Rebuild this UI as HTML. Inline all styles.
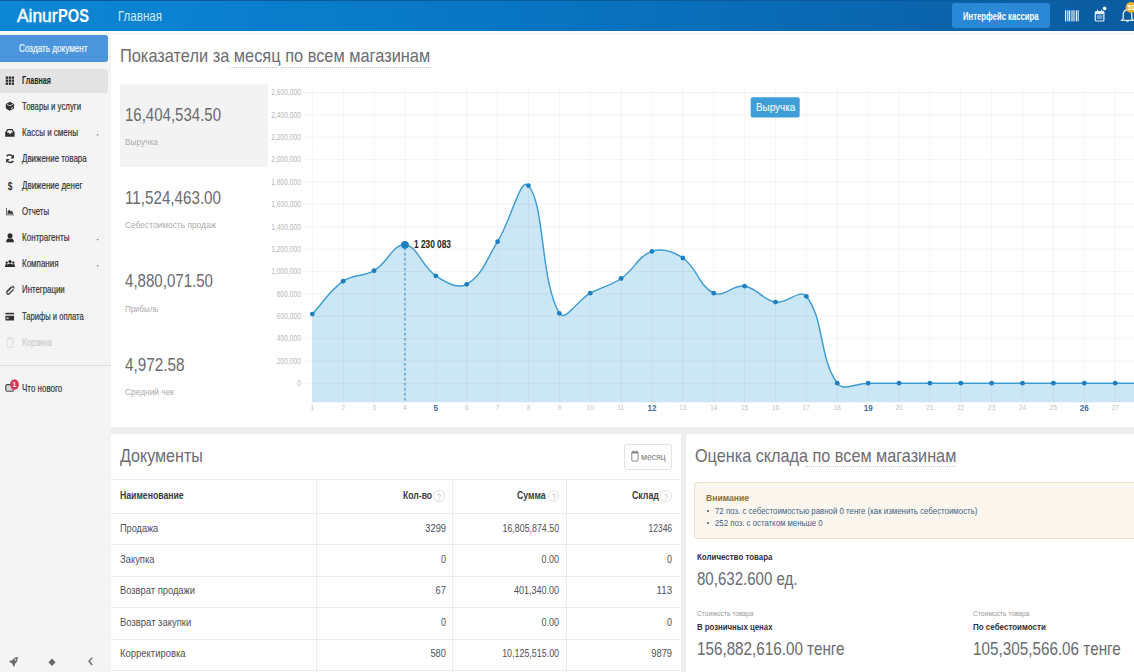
<!DOCTYPE html>
<html><head><meta charset="utf-8"><style>
html,body{margin:0;padding:0;width:1134px;height:672px;overflow:hidden;background:#eee}
body{position:relative;font-family:"Liberation Sans",sans-serif}
.b{position:absolute}
.t{position:absolute;white-space:nowrap;line-height:1}
svg text{font-family:"Liberation Sans",sans-serif}
</style></head><body>
<div class="b" style="left:0px;top:0px;width:1134px;height:672px;background:#eeeeee"></div>
<div class="b" style="left:0px;top:0px;width:1134px;height:31px;background:linear-gradient(90deg,#0d87d5 0%,#0878c6 40%,#0a65ae 80%,#0b5b9f 100%)"></div>
<div class="b" style="left:0px;top:0px;width:1134px;height:1px;background:#0b5a9c"></div>
<div class="t" style="left:17.1px;top:7px;font-size:18.6px;font-weight:400;color:#fff;-webkit-text-stroke:0.5px #fff;transform:scaleX(0.9327);transform-origin:0 0">Ainur</div>
<div class="t" style="left:58.3px;top:7px;font-size:18.6px;font-weight:700;color:#fff;;transform:scaleX(0.7892);transform-origin:0 0">POS</div>
<div class="t" style="left:118.0px;top:9px;font-size:14.4px;font-weight:400;color:#cfeafc;;transform:scaleX(0.8032);transform-origin:0 0">Главная</div>
<div class="b" style="left:951.5px;top:3px;width:98.0px;height:25px;background:#2a88d6;border-radius:3px"></div>
<div class="t" style="left:962.8px;top:12px;font-size:10px;font-weight:700;color:#fff;;transform:scaleX(0.7717);transform-origin:0 0">Интерфейс кассира</div>
<div class="b" style="left:0px;top:31px;width:111px;height:641px;background:#f4f4f4"></div>
<div class="b" style="left:0px;top:31px;width:1134px;height:3px;background:#f0f0f0"></div>
<div class="b" style="left:0px;top:31px;width:1134px;height:1.6000000000000014px;background:#fcfcfc"></div>
<div class="b" style="left:0px;top:35px;width:107.5px;height:26.5px;background:#4b95dc;border-radius:0 3px 3px 0"></div>
<div class="t" style="left:18.6px;top:43px;font-size:10.6px;font-weight:400;color:#f2f8fd;-webkit-text-stroke:0.2px currentColor;transform:scaleX(0.7700);transform-origin:0 0">Создать документ</div>
<div class="b" style="left:0px;top:68.5px;width:107.5px;height:24.5px;background:#e3e3e3;border-radius:0 3px 3px 0"></div>
<div class="t" style="left:22.0px;top:76px;font-size:10px;font-weight:700;color:#222;;transform:scaleX(0.7130);transform-origin:0 0">Главная</div>
<div class="t" style="left:22.0px;top:102px;font-size:10px;font-weight:400;color:#333;-webkit-text-stroke:0.18px currentColor;transform:scaleX(0.7815);transform-origin:0 0">Товары и услуги</div>
<div class="t" style="left:22.0px;top:128px;font-size:10px;font-weight:400;color:#333;-webkit-text-stroke:0.18px currentColor;transform:scaleX(0.8014);transform-origin:0 0">Кассы и смены</div>
<div class="t" style="left:22.0px;top:154px;font-size:10px;font-weight:400;color:#333;-webkit-text-stroke:0.18px currentColor;transform:scaleX(0.7958);transform-origin:0 0">Движение товара</div>
<div class="t" style="left:22.0px;top:181px;font-size:10px;font-weight:400;color:#333;-webkit-text-stroke:0.18px currentColor;transform:scaleX(0.7987);transform-origin:0 0">Движение денег</div>
<div class="t" style="left:22.0px;top:207px;font-size:10px;font-weight:400;color:#333;-webkit-text-stroke:0.18px currentColor;transform:scaleX(0.7808);transform-origin:0 0">Отчеты</div>
<div class="t" style="left:22.0px;top:233px;font-size:10px;font-weight:400;color:#333;-webkit-text-stroke:0.18px currentColor;transform:scaleX(0.8081);transform-origin:0 0">Контрагенты</div>
<div class="t" style="left:22.0px;top:259px;font-size:10px;font-weight:400;color:#333;-webkit-text-stroke:0.18px currentColor;transform:scaleX(0.7975);transform-origin:0 0">Компания</div>
<div class="t" style="left:22.0px;top:285px;font-size:10px;font-weight:400;color:#333;-webkit-text-stroke:0.18px currentColor;transform:scaleX(0.7846);transform-origin:0 0">Интеграции</div>
<div class="t" style="left:22.0px;top:312px;font-size:10px;font-weight:400;color:#333;-webkit-text-stroke:0.18px currentColor;transform:scaleX(0.7607);transform-origin:0 0">Тарифы и оплата</div>
<div class="t" style="left:22.0px;top:338px;font-size:10px;font-weight:400;color:#c4c4c4;;transform:scaleX(0.7875);transform-origin:0 0">Корзина</div>
<div class="t" style="left:22.0px;top:384px;font-size:10px;font-weight:400;color:#333;-webkit-text-stroke:0.18px currentColor;transform:scaleX(0.7990);transform-origin:0 0">Что нового</div>
<div class="b" style="left:0px;top:365px;width:111px;height:1px;background:#dddddd"></div>
<div class="b" style="left:111px;top:34px;width:1023px;height:393px;background:#fff"></div>
<div class="t" style="left:120.2px;top:47px;font-size:18.4px;font-weight:400;color:#6c6c72;;transform:scaleX(0.8900);transform-origin:0 0">Показатели за месяц по всем магазинам</div>
<div class="b" style="left:229.5px;top:67px;width:47px;height:0;border-top:1px dotted #c4c4c4"></div>
<div class="b" style="left:280.5px;top:67px;width:150px;height:0;border-top:1px dotted #c4c4c4"></div>
<div class="b" style="left:120px;top:83.5px;width:148px;height:83.0px;background:#f3f3f3"></div>
<div class="t" style="left:125.3px;top:106px;font-size:18.2px;font-weight:400;color:#6a6a70;;transform:scaleX(0.8254);transform-origin:0 0">16,404,534.50</div>
<div class="t" style="left:125.3px;top:137px;font-size:9.8px;font-weight:400;color:#ababab;;transform:scaleX(0.8437);transform-origin:0 0">Выручка</div>
<div class="t" style="left:125.3px;top:189px;font-size:18.2px;font-weight:400;color:#6a6a70;;transform:scaleX(0.8350);transform-origin:0 0">11,524,463.00</div>
<div class="t" style="left:125.3px;top:220px;font-size:9.8px;font-weight:400;color:#ababab;;transform:scaleX(0.8550);transform-origin:0 0">Себестоимость продаж</div>
<div class="t" style="left:125.3px;top:272px;font-size:18.2px;font-weight:400;color:#6a6a70;;transform:scaleX(0.8286);transform-origin:0 0">4,880,071.50</div>
<div class="t" style="left:125.3px;top:304px;font-size:9.8px;font-weight:400;color:#ababab;;transform:scaleX(0.8084);transform-origin:0 0">Прибыль</div>
<div class="t" style="left:125.3px;top:356px;font-size:18.2px;font-weight:400;color:#6a6a70;;transform:scaleX(0.8404);transform-origin:0 0">4,972.58</div>
<div class="t" style="left:125.3px;top:387px;font-size:9.8px;font-weight:400;color:#ababab;;transform:scaleX(0.8538);transform-origin:0 0">Средний чек</div>
<svg class="chart" width="1134" height="672" viewBox="0 0 1134 672" style="position:absolute;left:0;top:0">
<defs><clipPath id="cp"><rect x="111" y="34" width="1023" height="393"/></clipPath></defs><g clip-path="url(#cp)">
<path d="M312.30,314.10 C324.65,300.94 328.84,291.28 343.18,281.20 C353.54,273.92 363.01,277.21 374.06,270.70 C387.71,262.65 393.10,243.82 404.94,244.80 C417.80,245.86 421.56,266.68 435.82,275.80 C446.26,282.48 457.35,289.46 466.70,284.30 C482.06,275.82 486.44,259.51 497.58,241.70 C511.14,220.03 520.36,176.21 528.46,185.60 C545.07,204.85 540.05,279.69 559.34,313.30 C564.75,322.73 577.41,300.42 590.22,293.20 C602.11,286.50 609.88,286.10 621.10,278.50 C634.58,269.38 638.01,256.04 651.98,251.40 C662.72,247.84 672.91,251.27 682.86,258.00 C697.61,267.99 699.00,286.47 713.74,293.20 C723.71,297.75 732.84,284.50 744.62,286.20 C757.54,288.06 762.53,299.98 775.50,302.10 C787.23,304.02 800.10,288.06 806.38,296.30 C824.81,320.50 818.75,357.16 837.26,383.20 C843.46,391.92 855.79,383.20 868.14,383.20 C880.49,383.20 886.67,383.20 899.02,383.20 C911.37,383.20 917.55,383.20 929.90,383.20 C942.25,383.20 948.43,383.20 960.78,383.20 C973.13,383.20 979.31,383.20 991.66,383.20 C1004.01,383.20 1010.19,383.20 1022.54,383.20 C1034.89,383.20 1041.07,383.20 1053.42,383.20 C1065.77,383.20 1071.95,383.20 1084.30,383.20 C1096.65,383.20 1102.83,383.20 1115.18,383.20 C1127.53,383.20 1133.71,383.20 1146.06,383.20 C1158.41,383.20 1164.59,383.20 1176.94,383.20 C1189.29,383.20 1195.47,383.20 1207.82,383.20 C1220.17,383.20 1226.35,383.20 1238.70,383.20 L1238.70,402.3 L312.30,402.3 Z" fill="#cbe6f5"/>
<line x1="303.5" y1="383.40" x2="1134" y2="383.40" stroke="rgba(0,0,0,0.045)" stroke-width="1"/>
<line x1="303.5" y1="361.02" x2="1134" y2="361.02" stroke="rgba(0,0,0,0.045)" stroke-width="1"/>
<line x1="303.5" y1="338.64" x2="1134" y2="338.64" stroke="rgba(0,0,0,0.045)" stroke-width="1"/>
<line x1="303.5" y1="316.26" x2="1134" y2="316.26" stroke="rgba(0,0,0,0.045)" stroke-width="1"/>
<line x1="303.5" y1="293.88" x2="1134" y2="293.88" stroke="rgba(0,0,0,0.045)" stroke-width="1"/>
<line x1="303.5" y1="271.50" x2="1134" y2="271.50" stroke="rgba(0,0,0,0.045)" stroke-width="1"/>
<line x1="303.5" y1="249.12" x2="1134" y2="249.12" stroke="rgba(0,0,0,0.045)" stroke-width="1"/>
<line x1="303.5" y1="226.74" x2="1134" y2="226.74" stroke="rgba(0,0,0,0.045)" stroke-width="1"/>
<line x1="303.5" y1="204.36" x2="1134" y2="204.36" stroke="rgba(0,0,0,0.045)" stroke-width="1"/>
<line x1="303.5" y1="181.98" x2="1134" y2="181.98" stroke="rgba(0,0,0,0.045)" stroke-width="1"/>
<line x1="303.5" y1="159.60" x2="1134" y2="159.60" stroke="rgba(0,0,0,0.045)" stroke-width="1"/>
<line x1="303.5" y1="137.22" x2="1134" y2="137.22" stroke="rgba(0,0,0,0.045)" stroke-width="1"/>
<line x1="303.5" y1="114.84" x2="1134" y2="114.84" stroke="rgba(0,0,0,0.045)" stroke-width="1"/>
<line x1="303.5" y1="92.46" x2="1134" y2="92.46" stroke="rgba(0,0,0,0.045)" stroke-width="1"/>
<line x1="312.30" y1="86" x2="312.30" y2="402.3" stroke="rgba(0,0,0,0.045)" stroke-width="1"/>
<line x1="343.18" y1="86" x2="343.18" y2="402.3" stroke="rgba(0,0,0,0.045)" stroke-width="1"/>
<line x1="374.06" y1="86" x2="374.06" y2="402.3" stroke="rgba(0,0,0,0.045)" stroke-width="1"/>
<line x1="404.94" y1="86" x2="404.94" y2="402.3" stroke="rgba(0,0,0,0.045)" stroke-width="1"/>
<line x1="435.82" y1="86" x2="435.82" y2="402.3" stroke="rgba(0,0,0,0.045)" stroke-width="1"/>
<line x1="466.70" y1="86" x2="466.70" y2="402.3" stroke="rgba(0,0,0,0.045)" stroke-width="1"/>
<line x1="497.58" y1="86" x2="497.58" y2="402.3" stroke="rgba(0,0,0,0.045)" stroke-width="1"/>
<line x1="528.46" y1="86" x2="528.46" y2="402.3" stroke="rgba(0,0,0,0.045)" stroke-width="1"/>
<line x1="559.34" y1="86" x2="559.34" y2="402.3" stroke="rgba(0,0,0,0.045)" stroke-width="1"/>
<line x1="590.22" y1="86" x2="590.22" y2="402.3" stroke="rgba(0,0,0,0.045)" stroke-width="1"/>
<line x1="621.10" y1="86" x2="621.10" y2="402.3" stroke="rgba(0,0,0,0.045)" stroke-width="1"/>
<line x1="651.98" y1="86" x2="651.98" y2="402.3" stroke="rgba(0,0,0,0.045)" stroke-width="1"/>
<line x1="682.86" y1="86" x2="682.86" y2="402.3" stroke="rgba(0,0,0,0.045)" stroke-width="1"/>
<line x1="713.74" y1="86" x2="713.74" y2="402.3" stroke="rgba(0,0,0,0.045)" stroke-width="1"/>
<line x1="744.62" y1="86" x2="744.62" y2="402.3" stroke="rgba(0,0,0,0.045)" stroke-width="1"/>
<line x1="775.50" y1="86" x2="775.50" y2="402.3" stroke="rgba(0,0,0,0.045)" stroke-width="1"/>
<line x1="806.38" y1="86" x2="806.38" y2="402.3" stroke="rgba(0,0,0,0.045)" stroke-width="1"/>
<line x1="837.26" y1="86" x2="837.26" y2="402.3" stroke="rgba(0,0,0,0.045)" stroke-width="1"/>
<line x1="868.14" y1="86" x2="868.14" y2="402.3" stroke="rgba(0,0,0,0.045)" stroke-width="1"/>
<line x1="899.02" y1="86" x2="899.02" y2="402.3" stroke="rgba(0,0,0,0.045)" stroke-width="1"/>
<line x1="929.90" y1="86" x2="929.90" y2="402.3" stroke="rgba(0,0,0,0.045)" stroke-width="1"/>
<line x1="960.78" y1="86" x2="960.78" y2="402.3" stroke="rgba(0,0,0,0.045)" stroke-width="1"/>
<line x1="991.66" y1="86" x2="991.66" y2="402.3" stroke="rgba(0,0,0,0.045)" stroke-width="1"/>
<line x1="1022.54" y1="86" x2="1022.54" y2="402.3" stroke="rgba(0,0,0,0.045)" stroke-width="1"/>
<line x1="1053.42" y1="86" x2="1053.42" y2="402.3" stroke="rgba(0,0,0,0.045)" stroke-width="1"/>
<line x1="1084.30" y1="86" x2="1084.30" y2="402.3" stroke="rgba(0,0,0,0.045)" stroke-width="1"/>
<line x1="1115.18" y1="86" x2="1115.18" y2="402.3" stroke="rgba(0,0,0,0.045)" stroke-width="1"/>
<line x1="1146.06" y1="86" x2="1146.06" y2="402.3" stroke="rgba(0,0,0,0.045)" stroke-width="1"/>
<line x1="1176.94" y1="86" x2="1176.94" y2="402.3" stroke="rgba(0,0,0,0.045)" stroke-width="1"/>
<line x1="1207.82" y1="86" x2="1207.82" y2="402.3" stroke="rgba(0,0,0,0.045)" stroke-width="1"/>
<line x1="1238.70" y1="86" x2="1238.70" y2="402.3" stroke="rgba(0,0,0,0.045)" stroke-width="1"/>
<path d="M312.30,314.10 C324.65,300.94 328.84,291.28 343.18,281.20 C353.54,273.92 363.01,277.21 374.06,270.70 C387.71,262.65 393.10,243.82 404.94,244.80 C417.80,245.86 421.56,266.68 435.82,275.80 C446.26,282.48 457.35,289.46 466.70,284.30 C482.06,275.82 486.44,259.51 497.58,241.70 C511.14,220.03 520.36,176.21 528.46,185.60 C545.07,204.85 540.05,279.69 559.34,313.30 C564.75,322.73 577.41,300.42 590.22,293.20 C602.11,286.50 609.88,286.10 621.10,278.50 C634.58,269.38 638.01,256.04 651.98,251.40 C662.72,247.84 672.91,251.27 682.86,258.00 C697.61,267.99 699.00,286.47 713.74,293.20 C723.71,297.75 732.84,284.50 744.62,286.20 C757.54,288.06 762.53,299.98 775.50,302.10 C787.23,304.02 800.10,288.06 806.38,296.30 C824.81,320.50 818.75,357.16 837.26,383.20 C843.46,391.92 855.79,383.20 868.14,383.20 C880.49,383.20 886.67,383.20 899.02,383.20 C911.37,383.20 917.55,383.20 929.90,383.20 C942.25,383.20 948.43,383.20 960.78,383.20 C973.13,383.20 979.31,383.20 991.66,383.20 C1004.01,383.20 1010.19,383.20 1022.54,383.20 C1034.89,383.20 1041.07,383.20 1053.42,383.20 C1065.77,383.20 1071.95,383.20 1084.30,383.20 C1096.65,383.20 1102.83,383.20 1115.18,383.20 C1127.53,383.20 1133.71,383.20 1146.06,383.20 C1158.41,383.20 1164.59,383.20 1176.94,383.20 C1189.29,383.20 1195.47,383.20 1207.82,383.20 C1220.17,383.20 1226.35,383.20 1238.70,383.20" fill="none" stroke="#3c9cd2" stroke-width="1.45"/>
<line x1="404.94" y1="248" x2="404.94" y2="402" stroke="#2a86c6" stroke-width="1" stroke-dasharray="2.5,2.5"/>
<circle cx="312.30" cy="314.10" r="2.4" fill="#1c7fc0"/>
<circle cx="343.18" cy="281.20" r="2.4" fill="#1c7fc0"/>
<circle cx="374.06" cy="270.70" r="2.4" fill="#1c7fc0"/>
<circle cx="404.94" cy="244.80" r="3.9" fill="#1c7fc0"/>
<circle cx="435.82" cy="275.80" r="2.4" fill="#1c7fc0"/>
<circle cx="466.70" cy="284.30" r="2.4" fill="#1c7fc0"/>
<circle cx="497.58" cy="241.70" r="2.4" fill="#1c7fc0"/>
<circle cx="528.46" cy="185.60" r="2.4" fill="#1c7fc0"/>
<circle cx="559.34" cy="313.30" r="2.4" fill="#1c7fc0"/>
<circle cx="590.22" cy="293.20" r="2.4" fill="#1c7fc0"/>
<circle cx="621.10" cy="278.50" r="2.4" fill="#1c7fc0"/>
<circle cx="651.98" cy="251.40" r="2.4" fill="#1c7fc0"/>
<circle cx="682.86" cy="258.00" r="2.4" fill="#1c7fc0"/>
<circle cx="713.74" cy="293.20" r="2.4" fill="#1c7fc0"/>
<circle cx="744.62" cy="286.20" r="2.4" fill="#1c7fc0"/>
<circle cx="775.50" cy="302.10" r="2.4" fill="#1c7fc0"/>
<circle cx="806.38" cy="296.30" r="2.4" fill="#1c7fc0"/>
<circle cx="837.26" cy="383.20" r="2.4" fill="#1c7fc0"/>
<circle cx="868.14" cy="383.20" r="2.4" fill="#1c7fc0"/>
<circle cx="899.02" cy="383.20" r="2.4" fill="#1c7fc0"/>
<circle cx="929.90" cy="383.20" r="2.4" fill="#1c7fc0"/>
<circle cx="960.78" cy="383.20" r="2.4" fill="#1c7fc0"/>
<circle cx="991.66" cy="383.20" r="2.4" fill="#1c7fc0"/>
<circle cx="1022.54" cy="383.20" r="2.4" fill="#1c7fc0"/>
<circle cx="1053.42" cy="383.20" r="2.4" fill="#1c7fc0"/>
<circle cx="1084.30" cy="383.20" r="2.4" fill="#1c7fc0"/>
<circle cx="1115.18" cy="383.20" r="2.4" fill="#1c7fc0"/>
<circle cx="1146.06" cy="383.20" r="2.4" fill="#1c7fc0"/>
<circle cx="1176.94" cy="383.20" r="2.4" fill="#1c7fc0"/>
<circle cx="1207.82" cy="383.20" r="2.4" fill="#1c7fc0"/>
<circle cx="1238.70" cy="383.20" r="2.4" fill="#1c7fc0"/>
<text x="301" y="386.20" text-anchor="end" font-size="8.6" fill="#b8b8b8" transform="translate(301,0) scale(0.78,1) translate(-301,0)">0</text>
<text x="301" y="363.82" text-anchor="end" font-size="8.6" fill="#b8b8b8" transform="translate(301,0) scale(0.78,1) translate(-301,0)">200,000</text>
<text x="301" y="341.44" text-anchor="end" font-size="8.6" fill="#b8b8b8" transform="translate(301,0) scale(0.78,1) translate(-301,0)">400,000</text>
<text x="301" y="319.06" text-anchor="end" font-size="8.6" fill="#b8b8b8" transform="translate(301,0) scale(0.78,1) translate(-301,0)">600,000</text>
<text x="301" y="296.68" text-anchor="end" font-size="8.6" fill="#b8b8b8" transform="translate(301,0) scale(0.78,1) translate(-301,0)">800,000</text>
<text x="301" y="274.30" text-anchor="end" font-size="8.6" fill="#b8b8b8" transform="translate(301,0) scale(0.78,1) translate(-301,0)">1,000,000</text>
<text x="301" y="251.92" text-anchor="end" font-size="8.6" fill="#b8b8b8" transform="translate(301,0) scale(0.78,1) translate(-301,0)">1,200,000</text>
<text x="301" y="229.54" text-anchor="end" font-size="8.6" fill="#b8b8b8" transform="translate(301,0) scale(0.78,1) translate(-301,0)">1,400,000</text>
<text x="301" y="207.16" text-anchor="end" font-size="8.6" fill="#b8b8b8" transform="translate(301,0) scale(0.78,1) translate(-301,0)">1,600,000</text>
<text x="301" y="184.78" text-anchor="end" font-size="8.6" fill="#b8b8b8" transform="translate(301,0) scale(0.78,1) translate(-301,0)">1,800,000</text>
<text x="301" y="162.40" text-anchor="end" font-size="8.6" fill="#b8b8b8" transform="translate(301,0) scale(0.78,1) translate(-301,0)">2,000,000</text>
<text x="301" y="140.02" text-anchor="end" font-size="8.6" fill="#b8b8b8" transform="translate(301,0) scale(0.78,1) translate(-301,0)">2,200,000</text>
<text x="301" y="117.64" text-anchor="end" font-size="8.6" fill="#b8b8b8" transform="translate(301,0) scale(0.78,1) translate(-301,0)">2,400,000</text>
<text x="301" y="95.26" text-anchor="end" font-size="8.6" fill="#b8b8b8" transform="translate(301,0) scale(0.78,1) translate(-301,0)">2,600,000</text>
<text x="312.30" y="410.5" text-anchor="middle" font-size="7.5" fill="#c0c0c0" transform="translate(312.30,0) scale(0.85,1) translate(-312.30,0)">1</text>
<text x="343.18" y="410.5" text-anchor="middle" font-size="7.5" fill="#c0c0c0" transform="translate(343.18,0) scale(0.85,1) translate(-343.18,0)">2</text>
<text x="374.06" y="410.5" text-anchor="middle" font-size="7.5" fill="#c0c0c0" transform="translate(374.06,0) scale(0.85,1) translate(-374.06,0)">3</text>
<text x="404.94" y="410.5" text-anchor="middle" font-size="7.5" fill="#c0c0c0" transform="translate(404.94,0) scale(0.85,1) translate(-404.94,0)">4</text>
<text x="435.82" y="411.3" text-anchor="middle" font-size="9.5" font-weight="700" fill="#3d6f9c" transform="translate(435.82,0) scale(0.85,1) translate(-435.82,0)">5</text>
<text x="466.70" y="410.5" text-anchor="middle" font-size="7.5" fill="#c0c0c0" transform="translate(466.70,0) scale(0.85,1) translate(-466.70,0)">6</text>
<text x="497.58" y="410.5" text-anchor="middle" font-size="7.5" fill="#c0c0c0" transform="translate(497.58,0) scale(0.85,1) translate(-497.58,0)">7</text>
<text x="528.46" y="410.5" text-anchor="middle" font-size="7.5" fill="#c0c0c0" transform="translate(528.46,0) scale(0.85,1) translate(-528.46,0)">8</text>
<text x="559.34" y="410.5" text-anchor="middle" font-size="7.5" fill="#c0c0c0" transform="translate(559.34,0) scale(0.85,1) translate(-559.34,0)">9</text>
<text x="590.22" y="410.5" text-anchor="middle" font-size="7.5" fill="#c0c0c0" transform="translate(590.22,0) scale(0.85,1) translate(-590.22,0)">10</text>
<text x="621.10" y="410.5" text-anchor="middle" font-size="7.5" fill="#c0c0c0" transform="translate(621.10,0) scale(0.85,1) translate(-621.10,0)">11</text>
<text x="651.98" y="411.3" text-anchor="middle" font-size="9.5" font-weight="700" fill="#3d6f9c" transform="translate(651.98,0) scale(0.85,1) translate(-651.98,0)">12</text>
<text x="682.86" y="410.5" text-anchor="middle" font-size="7.5" fill="#c0c0c0" transform="translate(682.86,0) scale(0.85,1) translate(-682.86,0)">13</text>
<text x="713.74" y="410.5" text-anchor="middle" font-size="7.5" fill="#c0c0c0" transform="translate(713.74,0) scale(0.85,1) translate(-713.74,0)">14</text>
<text x="744.62" y="410.5" text-anchor="middle" font-size="7.5" fill="#c0c0c0" transform="translate(744.62,0) scale(0.85,1) translate(-744.62,0)">15</text>
<text x="775.50" y="410.5" text-anchor="middle" font-size="7.5" fill="#c0c0c0" transform="translate(775.50,0) scale(0.85,1) translate(-775.50,0)">16</text>
<text x="806.38" y="410.5" text-anchor="middle" font-size="7.5" fill="#c0c0c0" transform="translate(806.38,0) scale(0.85,1) translate(-806.38,0)">17</text>
<text x="837.26" y="410.5" text-anchor="middle" font-size="7.5" fill="#c0c0c0" transform="translate(837.26,0) scale(0.85,1) translate(-837.26,0)">18</text>
<text x="868.14" y="411.3" text-anchor="middle" font-size="9.5" font-weight="700" fill="#3d6f9c" transform="translate(868.14,0) scale(0.85,1) translate(-868.14,0)">19</text>
<text x="899.02" y="410.5" text-anchor="middle" font-size="7.5" fill="#c0c0c0" transform="translate(899.02,0) scale(0.85,1) translate(-899.02,0)">20</text>
<text x="929.90" y="410.5" text-anchor="middle" font-size="7.5" fill="#c0c0c0" transform="translate(929.90,0) scale(0.85,1) translate(-929.90,0)">21</text>
<text x="960.78" y="410.5" text-anchor="middle" font-size="7.5" fill="#c0c0c0" transform="translate(960.78,0) scale(0.85,1) translate(-960.78,0)">22</text>
<text x="991.66" y="410.5" text-anchor="middle" font-size="7.5" fill="#c0c0c0" transform="translate(991.66,0) scale(0.85,1) translate(-991.66,0)">23</text>
<text x="1022.54" y="410.5" text-anchor="middle" font-size="7.5" fill="#c0c0c0" transform="translate(1022.54,0) scale(0.85,1) translate(-1022.54,0)">24</text>
<text x="1053.42" y="410.5" text-anchor="middle" font-size="7.5" fill="#c0c0c0" transform="translate(1053.42,0) scale(0.85,1) translate(-1053.42,0)">25</text>
<text x="1084.30" y="411.3" text-anchor="middle" font-size="9.5" font-weight="700" fill="#3d6f9c" transform="translate(1084.30,0) scale(0.85,1) translate(-1084.30,0)">26</text>
<text x="1115.18" y="410.5" text-anchor="middle" font-size="7.5" fill="#c0c0c0" transform="translate(1115.18,0) scale(0.85,1) translate(-1115.18,0)">27</text>
<text x="1146.06" y="410.5" text-anchor="middle" font-size="7.5" fill="#c0c0c0" transform="translate(1146.06,0) scale(0.85,1) translate(-1146.06,0)">28</text>
<text x="1176.94" y="410.5" text-anchor="middle" font-size="7.5" fill="#c0c0c0" transform="translate(1176.94,0) scale(0.85,1) translate(-1176.94,0)">29</text>
<text x="1207.82" y="410.5" text-anchor="middle" font-size="7.5" fill="#c0c0c0" transform="translate(1207.82,0) scale(0.85,1) translate(-1207.82,0)">30</text>
<text x="1238.70" y="410.5" text-anchor="middle" font-size="7.5" fill="#c0c0c0" transform="translate(1238.70,0) scale(0.85,1) translate(-1238.70,0)">31</text>
<rect x="750.7" y="97.3" width="49" height="20.3" rx="2" fill="#3e9fd8"/>
<text x="756" y="111" font-size="11.5" fill="#fff" transform="translate(756,0) scale(0.861,1) translate(-756,0)">Выручка</text>
<text x="414" y="248.5" font-size="10" font-weight="700" fill="#222" transform="translate(414,0) scale(0.831,1) translate(-414,0)">1 230 083</text>
</g></svg>
<div class="b" style="left:111px;top:434px;width:569.5px;height:238px;background:#fff"></div>
<div class="t" style="left:120.0px;top:447px;font-size:18.2px;font-weight:400;color:#6c6c72;;transform:scaleX(0.8831);transform-origin:0 0">Документы</div>
<div class="b" style="left:623.5px;top:443.8px;width:48.700000000000045px;height:26.399999999999977px;background:#fff;border:1px solid #e3e3e3;border-radius:3px;box-sizing:border-box"></div>
<div class="t" style="left:641.4px;top:452px;font-size:9.5px;font-weight:400;color:#777;;transform:scaleX(0.9096);transform-origin:0 0">месяц</div>
<div class="b" style="left:111px;top:479px;width:569.5px;height:1px;background:#ececec"></div>
<div class="b" style="left:111px;top:512.5px;width:569.5px;height:1.0px;background:#ececec"></div>
<div class="b" style="left:111px;top:544px;width:569.5px;height:1px;background:#ececec"></div>
<div class="b" style="left:111px;top:575.5px;width:569.5px;height:1.0px;background:#ececec"></div>
<div class="b" style="left:111px;top:607px;width:569.5px;height:1px;background:#ececec"></div>
<div class="b" style="left:111px;top:638.5px;width:569.5px;height:1.0px;background:#ececec"></div>
<div class="b" style="left:111px;top:670px;width:569.5px;height:1px;background:#ececec"></div>
<div class="b" style="left:316px;top:479px;width:1px;height:193px;background:#ececec"></div>
<div class="b" style="left:452px;top:479px;width:1px;height:193px;background:#ececec"></div>
<div class="b" style="left:566px;top:479px;width:1px;height:193px;background:#ececec"></div>
<div class="t" style="left:120.0px;top:490px;font-size:10.5px;font-weight:700;color:#3a3a44;;transform:scaleX(0.8268);transform-origin:0 0">Наименование</div>
<div class="t" style="left:402.5px;top:490px;font-size:10.5px;font-weight:700;color:#3a3a44;;transform:scaleX(0.8204);transform-origin:0 0">Кол-во</div>
<div class="t" style="left:516.5px;top:490px;font-size:10.5px;font-weight:700;color:#3a3a44;;transform:scaleX(0.8311);transform-origin:0 0">Сумма</div>
<div class="t" style="left:631.6px;top:490px;font-size:10.5px;font-weight:700;color:#3a3a44;;transform:scaleX(0.8365);transform-origin:0 0">Склад</div>
<div class="b" style="left:433.4px;top:489.9px;width:11.6px;height:12.3px;border:1px solid #e2e2e2;border-radius:50%;box-sizing:border-box"></div>
<div class="t" style="left:239.2px;width:400px;text-align:center;top:493px;font-size:9px;font-weight:400;color:#c2c2c2;;transform:scaleX(0.8000);transform-origin:50% 0">?</div>
<div class="b" style="left:547.7px;top:489.9px;width:11.6px;height:12.3px;border:1px solid #e2e2e2;border-radius:50%;box-sizing:border-box"></div>
<div class="t" style="left:353.5px;width:400px;text-align:center;top:493px;font-size:9px;font-weight:400;color:#c2c2c2;;transform:scaleX(0.8000);transform-origin:50% 0">?</div>
<div class="b" style="left:660.3px;top:489.9px;width:11.6px;height:12.3px;border:1px solid #e2e2e2;border-radius:50%;box-sizing:border-box"></div>
<div class="t" style="left:466.1px;width:400px;text-align:center;top:493px;font-size:9px;font-weight:400;color:#c2c2c2;;transform:scaleX(0.8000);transform-origin:50% 0">?</div>
<div class="t" style="left:120.0px;top:523px;font-size:10.8px;font-weight:400;color:#4f4f55;;transform:scaleX(0.8474);transform-origin:0 0">Продажа</div>
<div class="t" style="right:688.0px;top:523px;font-size:10.8px;font-weight:400;color:#4f4f55;;transform:scaleX(0.8655);transform-origin:100% 0">3299</div>
<div class="t" style="right:574.7px;top:523px;font-size:10.8px;font-weight:400;color:#4f4f55;;transform:scaleX(0.8183);transform-origin:100% 0">16,805,874.50</div>
<div class="t" style="right:461.8px;top:523px;font-size:10.8px;font-weight:400;color:#4f4f55;;transform:scaleX(0.7825);transform-origin:100% 0">12346</div>
<div class="t" style="left:120.0px;top:554px;font-size:10.8px;font-weight:400;color:#4f4f55;;transform:scaleX(0.8713);transform-origin:0 0">Закупка</div>
<div class="t" style="right:688.0px;top:554px;font-size:10.8px;font-weight:400;color:#4f4f55;;transform:scaleX(0.8312);transform-origin:100% 0">0</div>
<div class="t" style="right:574.7px;top:554px;font-size:10.8px;font-weight:400;color:#4f4f55;;transform:scaleX(0.8280);transform-origin:100% 0">0.00</div>
<div class="t" style="right:461.8px;top:554px;font-size:10.8px;font-weight:400;color:#4f4f55;;transform:scaleX(0.8312);transform-origin:100% 0">0</div>
<div class="t" style="left:120.0px;top:585px;font-size:10.8px;font-weight:400;color:#4f4f55;;transform:scaleX(0.8653);transform-origin:0 0">Возврат продажи</div>
<div class="t" style="right:688.0px;top:585px;font-size:10.8px;font-weight:400;color:#4f4f55;;transform:scaleX(0.8655);transform-origin:100% 0">67</div>
<div class="t" style="right:574.7px;top:585px;font-size:10.8px;font-weight:400;color:#4f4f55;;transform:scaleX(0.8326);transform-origin:100% 0">401,340.00</div>
<div class="t" style="right:461.8px;top:585px;font-size:10.8px;font-weight:400;color:#4f4f55;;transform:scaleX(0.9060);transform-origin:100% 0">113</div>
<div class="t" style="left:120.0px;top:617px;font-size:10.8px;font-weight:400;color:#4f4f55;;transform:scaleX(0.8758);transform-origin:0 0">Возврат закупки</div>
<div class="t" style="right:688.0px;top:617px;font-size:10.8px;font-weight:400;color:#4f4f55;;transform:scaleX(0.8312);transform-origin:100% 0">0</div>
<div class="t" style="right:574.7px;top:617px;font-size:10.8px;font-weight:400;color:#4f4f55;;transform:scaleX(0.8280);transform-origin:100% 0">0.00</div>
<div class="t" style="right:461.8px;top:617px;font-size:10.8px;font-weight:400;color:#4f4f55;;transform:scaleX(0.8312);transform-origin:100% 0">0</div>
<div class="t" style="left:120.0px;top:648px;font-size:10.8px;font-weight:400;color:#4f4f55;;transform:scaleX(0.8765);transform-origin:0 0">Корректировка</div>
<div class="t" style="right:688.0px;top:648px;font-size:10.8px;font-weight:400;color:#4f4f55;;transform:scaleX(0.8659);transform-origin:100% 0">580</div>
<div class="t" style="right:574.7px;top:648px;font-size:10.8px;font-weight:400;color:#4f4f55;;transform:scaleX(0.8241);transform-origin:100% 0">10,125,515.00</div>
<div class="t" style="right:461.8px;top:648px;font-size:10.8px;font-weight:400;color:#4f4f55;;transform:scaleX(0.8655);transform-origin:100% 0">9879</div>
<div class="b" style="left:686px;top:434px;width:448px;height:238px;background:#fff"></div>
<div class="t" style="left:694.7px;top:447px;font-size:18.6px;font-weight:400;color:#6c6c72;;transform:scaleX(0.8724);transform-origin:0 0">Оценка склада по всем магазинам</div>
<div class="b" style="left:806px;top:466px;width:150px;height:0;border-top:1px dotted #c4c4c4"></div>
<div class="b" style="left:694px;top:482.2px;width:444px;height:56.400000000000034px;background:#fcf7ee;border:1px solid #e9dec6;border-radius:3px;box-sizing:border-box"></div>
<div class="t" style="left:706.0px;top:493px;font-size:9.8px;font-weight:700;color:#8a6d3b;;transform:scaleX(0.8799);transform-origin:0 0">Внимание</div>
<div class="b" style="left:706.6px;top:509.6px;width:2.0px;height:2.0px;background:#4a5060;border-radius:1px"></div>
<div class="b" style="left:706.6px;top:521.5px;width:2.0px;height:2.0px;background:#4a5060;border-radius:1px"></div>
<div class="t" style="left:715.3px;top:507px;font-size:9px;font-weight:400;color:#3f5f84;;transform:scaleX(0.8737);transform-origin:0 0">72 поз. с себестоимостью равной 0 тенге (как изменить себестоимость)</div>
<div class="t" style="left:715.3px;top:519px;font-size:9px;font-weight:400;color:#3f5f84;;transform:scaleX(0.8671);transform-origin:0 0">252 поз. с остатком меньше 0</div>
<div class="t" style="left:696.5px;top:552px;font-size:9.8px;font-weight:700;color:#2f3340;;transform:scaleX(0.8097);transform-origin:0 0">Количество товара</div>
<div class="t" style="left:696.5px;top:570px;font-size:18.4px;font-weight:400;color:#6a6a70;;transform:scaleX(0.8182);transform-origin:0 0">80,632.600 ед.</div>
<div class="t" style="left:696.5px;top:610px;font-size:7px;font-weight:400;color:#9a9a9a;;transform:scaleX(0.9521);transform-origin:0 0">Стоимость товара</div>
<div class="t" style="left:696.5px;top:622px;font-size:9.8px;font-weight:700;color:#2f3340;;transform:scaleX(0.7958);transform-origin:0 0">В розничных ценах</div>
<div class="t" style="left:696.5px;top:641px;font-size:17.8px;font-weight:400;color:#6a6a70;;transform:scaleX(0.8566);transform-origin:0 0">156,882,616.00 тенге</div>
<div class="t" style="left:972.6px;top:610px;font-size:7px;font-weight:400;color:#9a9a9a;;transform:scaleX(0.9521);transform-origin:0 0">Стоимость товара</div>
<div class="t" style="left:972.6px;top:622px;font-size:9.8px;font-weight:700;color:#2f3340;;transform:scaleX(0.8167);transform-origin:0 0">По себестоимости</div>
<div class="t" style="left:972.6px;top:641px;font-size:17.8px;font-weight:400;color:#6a6a70;;transform:scaleX(0.8584);transform-origin:0 0">105,305,566.06 тенге</div>
<svg width="1134" height="672" style="position:absolute;left:0;top:0" viewBox="0 0 1134 672">
<g fill="#2b2b2b">
 <!-- grid -->
 <rect x="5.7" y="76.5" width="2.3" height="2.3"/><rect x="8.7" y="76.5" width="2.3" height="2.3"/><rect x="11.7" y="76.5" width="2.3" height="2.3"/>
 <rect x="5.7" y="79.5" width="2.3" height="2.3"/><rect x="8.7" y="79.5" width="2.3" height="2.3"/><rect x="11.7" y="79.5" width="2.3" height="2.3"/>
 <rect x="5.7" y="82.5" width="2.3" height="2.3"/><rect x="8.7" y="82.5" width="2.3" height="2.3"/><rect x="11.7" y="82.5" width="2.3" height="2.3"/>
 <!-- cube -->
 <path d="M9.9,101.8 L14,104 L14,108.6 L9.9,110.8 L5.8,108.6 L5.8,104 Z" fill="#333"/>
 <path d="M6.8,104.2 L9.9,105.9 L13,104.2" fill="none" stroke="#f4f4f4" stroke-width="0.8"/>
 <path d="M11,108.6 L13,107.5" fill="none" stroke="#f4f4f4" stroke-width="0.9"/>
 <!-- inbox -->
 <path d="M7.3,128.9 L12.5,128.9 L14.6,132.5 L14.6,136.7 L5.2,136.7 L5.2,132.5 Z" fill="#333"/>
 <path d="M6.8,132.6 L8.6,132.6 L9.2,133.8 L10.6,133.8 L11.2,132.6 L13,132.6 L11.9,130.2 L7.9,130.2 Z" fill="#f4f4f4"/>
 <!-- refresh -->
 <path d="M13.2,157.2 A3.9,3.9 0 0 0 6.6,156.3" fill="none" stroke="#333" stroke-width="1.5"/>
 <path d="M14,154.5 L14,158.4 L10.4,158.4 Z" fill="#333"/>
 <path d="M6.9,160.2 A3.9,3.9 0 0 0 13.4,161.1" fill="none" stroke="#333" stroke-width="1.5"/>
 <path d="M6.1,162.9 L6.1,159 L9.7,159 Z" fill="#333"/>
 <!-- dollar -->
 <text x="10" y="189.6" font-size="10.5" font-weight="700" fill="#333" text-anchor="middle" transform="translate(10,0) scale(0.8,1) translate(-10,0)">$</text>
 <!-- reports -->
 <path d="M6.1,208 L6.8,208 L6.8,214.5 L14,214.5 L14,215.3 L6.1,215.3 Z" fill="#333"/>
 <path d="M7.6,213.8 L7.6,211.2 L9.2,209.7 L10.6,211.6 L11.8,210.4 L13.4,213.8 Z" fill="#333"/>
 <!-- user -->
 <circle cx="10" cy="235.8" r="2.5" fill="#2b2b2b"/>
 <path d="M6.1,242.3 C6.1,239.6 7.4,238.6 8.4,238.4 L11.6,238.4 C12.6,238.6 14,239.6 14,242.3 Z" fill="#2b2b2b"/>
 <!-- users -->
 <circle cx="10" cy="261.6" r="1.6"/><circle cx="6.7" cy="262.6" r="1.2"/><circle cx="13.3" cy="262.6" r="1.2"/>
 <path d="M7.4,266.9 C7.4,264.5 8.4,263.5 10,263.5 C11.6,263.5 12.6,264.5 12.6,266.9 Z"/>
 <path d="M5,266.9 C5,264.9 5.6,264.1 6.7,264.1 C7.6,264.1 8,264.5 8,266.9 Z"/>
 <path d="M12,266.9 C12,264.5 12.4,264.1 13.3,264.1 C14.4,264.1 15,264.9 15,266.9 Z"/>
 <!-- paperclip -->
 <path d="M12.2,286.8 L7.2,291.8 A1.4,1.4 0 0 0 9.2,293.8 L13,290 M10.8,287.4 L7,291.2" fill="none" stroke="#444" stroke-width="1.3" stroke-linecap="round"/>
 <path d="M12.4,286.4 A1.5,1.5 0 0 1 13.6,288.6" fill="none" stroke="#444" stroke-width="1.3"/>
 <!-- card -->
 <rect x="5.4" y="312.8" width="8.7" height="1.6" fill="#333"/>
 <rect x="5.4" y="315.8" width="8.7" height="4.8" rx="0.6" fill="#333"/>
 <rect x="6.4" y="317.6" width="2.2" height="1.2" fill="#f4f4f4"/>
 <!-- trash -->
 <path d="M7,339 L13,339 L12.6,347.4 L7.4,347.4 Z" fill="none" stroke="#dedede" stroke-width="1"/>
 <rect x="6.4" y="337.8" width="7" height="1" fill="#dedede"/><rect x="8.8" y="336.8" width="2.2" height="1" fill="#dedede"/>
 <!-- what's new -->
 <rect x="5.8" y="384.6" width="7.6" height="6.6" rx="1.4" fill="#d8d8d8" stroke="#444" stroke-width="1.1"/>
 <ellipse cx="14.5" cy="384.5" rx="4.4" ry="5.2" fill="#d43a55"/>
 <text x="14.5" y="387.4" font-size="8" font-weight="700" fill="#fff" text-anchor="middle" transform="translate(14.5,0) scale(0.85,1) translate(-14.5,0)">1</text>
</g>
<!-- carets -->
<g fill="#666">
 <path d="M96.4,134.4 L98.8,134.4 L97.6,135.7 Z"/>
 <path d="M96.4,239.3 L98.8,239.3 L97.6,240.6 Z"/>
 <path d="M96.4,265.4 L98.8,265.4 L97.6,266.7 Z"/>
</g>
<!-- bottom sidebar icons -->
<g fill="#6a6a6a">
 <path d="M17.8,657 C15,657.2 13.2,658.6 12,660.4 L10,660.6 L9.2,662.2 L11,662.6 L12.8,664.4 L13.2,666.7 L14.8,665.8 L15,663.8 C16.8,662.6 18,660.8 17.8,657 Z"/>
 <circle cx="15.5" cy="659.6" r="0.9" fill="#f4f4f4"/>
 <path d="M52,658.6 L55.6,662.3 L52,666 L48.4,662.3 Z"/>
 <path d="M92.2,657.6 L89,661.3 L92.2,665" fill="none" stroke="#6a6a6a" stroke-width="1.4"/>
</g>
<!-- header icons -->
<g fill="#e6f0fa">
 <rect x="1065" y="10.3" width="1.2" height="11.1"/><rect x="1067" y="10.3" width="0.8" height="11.1"/><rect x="1068.6" y="10.3" width="1.4" height="11.1"/>
 <rect x="1070.8" y="10.3" width="0.8" height="11.1"/><rect x="1072.4" y="10.3" width="1.2" height="11.1"/><rect x="1074.4" y="10.3" width="0.8" height="11.1"/>
 <rect x="1076" y="10.3" width="1.4" height="11.1"/><rect x="1078" y="10.3" width="0.7" height="11.1"/>
</g>
<g>
 <rect x="1095.3" y="11.6" width="8.6" height="9.4" rx="1" fill="none" stroke="#e6f0fa" stroke-width="1.2"/>
 <rect x="1095.3" y="11.6" width="8.6" height="2.6" fill="#e6f0fa"/>
 <rect x="1097" y="9.6" width="1" height="2.6" fill="#e6f0fa"/><rect x="1101.2" y="9.6" width="1" height="2.6" fill="#e6f0fa"/>
 <rect x="1096.8" y="15.6" width="5.6" height="0.9" fill="#e6f0fa"/><rect x="1096.8" y="17.6" width="5.6" height="0.9" fill="#e6f0fa"/>
 <circle cx="1104.6" cy="8.4" r="1.8" fill="#fff"/>
 <path d="M1127.5,10 C1124.6,10 1123.2,12.4 1123.2,15 L1123.2,18.6 L1121.6,20.4 L1133.4,20.4 L1131.8,18.6 L1131.8,15 C1131.8,12.4 1130.4,10 1127.5,10 Z" fill="none" stroke="#e6f0fa" stroke-width="1.3"/>
 <path d="M1126,21.2 A1.6,1.6 0 0 0 1129,21.2 Z" fill="#e6f0fa"/>
 <circle cx="1131" cy="7.4" r="5.4" fill="#f0b429"/>
 <text x="1131" y="10" font-size="6.5" fill="#fff" text-anchor="middle" font-weight="700">51</text>
</g>
<!-- month button calendar -->
<g>
 <rect x="631.8" y="451.9" width="6.2" height="9.2" rx="0.8" fill="none" stroke="#7a7a7a" stroke-width="0.9"/>
 <rect x="631.8" y="451.9" width="6.2" height="1.5" fill="#7a7a7a"/>
 <rect x="632.9" y="450.4" width="0.8" height="1.8" fill="#7a7a7a"/><rect x="636.1" y="450.4" width="0.8" height="1.8" fill="#7a7a7a"/>
</g>

</svg>
</body></html>
